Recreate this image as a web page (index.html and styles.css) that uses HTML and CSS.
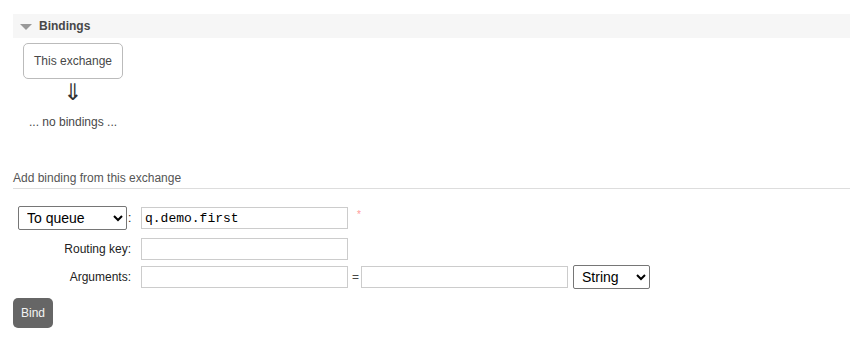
FILE: index.html
```html
<!DOCTYPE html>
<html>
<head>
<meta charset="utf-8">
<link rel="stylesheet" href="styles.css">
</head>
<body>
<div class="section">
  <div class="section-header"><span class="tri"></span><span class="section-title">Bindings</span></div>
  <div class="bindings">
    <div class="diagram">
      <div class="node">This exchange</div>
      <div class="arrow">⇓</div>
    </div>
    <p class="none">... no bindings ...</p>
  </div>

  <h3 class="form-title">Add binding from this exchange</h3>
  <form class="form">
    <div class="row row-first">
      <div class="label"><select class="sel sel-dest"><option>To queue</option><option>To exchange</option></select><span class="colon">:</span></div>
      <input class="txt mono" type="text" value="q.demo.first">
      <span class="req">*</span>
    </div>
    <div class="row row-key">
      <div class="label">Routing key:</div>
      <input class="txt" type="text">
    </div>
    <div class="row row-args">
      <div class="label">Arguments:</div>
      <input class="txt" type="text">
      <span class="eq">=</span>
      <input class="txt txt-val" type="text">
      <select class="sel sel-type"><option>String</option><option>Number</option><option>Boolean</option></select>
    </div>
    <button class="btn" type="button">Bind</button>
  </form>
</div>
</body>
</html>
```

FILE: styles.css
```css
html, body {
  margin: 0;
  padding: 0;
  background: #fff;
}
body {
  font-family: "Liberation Sans", Arial, sans-serif;
  font-size: 12px;
  color: #484848;
}
.section {
  padding: 14px 0 0 13px;
}
.section-header {
  height: 24px;
  background: #f6f6f6;
  display: flex;
  align-items: center;
}
.tri {
  width: 0;
  height: 0;
  margin-left: 7px;
  margin-top: 1px;
  border-left: 6px solid transparent;
  border-right: 6px solid transparent;
  border-top: 6px solid #999;
}
.section-title {
  margin-left: 7px;
  font-weight: bold;
  color: #484848;
}
.bindings {
  padding-left: 10px;
}
.diagram {
  width: 100px;
  display: flex;
  flex-direction: column;
  align-items: center;
}
.node {
  margin-top: 5px;
  width: 100px;
  height: 36px;
  box-sizing: border-box;
  border: 1px solid #bbb;
  border-radius: 5px;
  display: flex;
  align-items: center;
  justify-content: center;
  color: #484848;
}
.arrow {
  font-family: "DejaVu Sans", sans-serif;
  font-size: 23px;
  line-height: 24px;
  margin-top: 1px;
  color: #333;
}
.none {
  margin: 11px 0 0 6px;
  line-height: 14px;
  color: #484848;
}
.form-title {
  margin: 42px 0 0 0;
  font-size: 12px;
  font-weight: normal;
  line-height: 14px;
  padding-bottom: 3px;
  border-bottom: 1px solid #ddd;
  color: #555;
}
.form {
  margin: 0;
  padding-top: 17px;
}
.row {
  display: flex;
  align-items: center;
}
.row-key {
  margin-top: 8px;
}
.row-args {
  margin-top: 5px;
}
.label {
  width: 118px;
  display: flex;
  justify-content: flex-end;
  align-items: center;
  color: #222;
}
.colon {
  margin-left: 1px;
  width: 3px;
}
.sel {
  font-family: "Liberation Sans", Arial, sans-serif;
  font-size: 14px;
  height: 24px;
  box-sizing: border-box;
  color: #000;
  background: #fff;
  border: 1px solid #767676;
  border-radius: 2px;
  padding: 0 2px 0 4px;
}
.sel-dest {
  width: 109px;
}
.sel-type {
  width: 77px;
  margin-left: 5px;
}
.txt {
  margin: 0 0 0 10px;
  width: 207px;
  height: 22px;
  box-sizing: border-box;
  border: 1px solid #ccc;
  padding: 0 3px;
  font-family: "Liberation Sans", Arial, sans-serif;
  font-size: 13px;
  color: #000;
  outline: none;
}
.mono {
  font-family: "Liberation Mono", "Courier New", monospace;
  font-size: 13px;
}
.txt-val {
  margin-left: 2px;
}
.req {
  margin-left: 9px;
  color: #f99;
  font-size: 10px;
  align-self: flex-start;
  margin-top: 3px;
}
.eq {
  margin-left: 4px;
  color: #484848;
}
.btn {
  margin-top: 9px;
  width: 40px;
  height: 30px;
  background: #666;
  color: #f4f4f4;
  border: none;
  border-radius: 5px;
  font-family: "Liberation Sans", Arial, sans-serif;
  font-size: 12px;
  padding: 0;
}
```
